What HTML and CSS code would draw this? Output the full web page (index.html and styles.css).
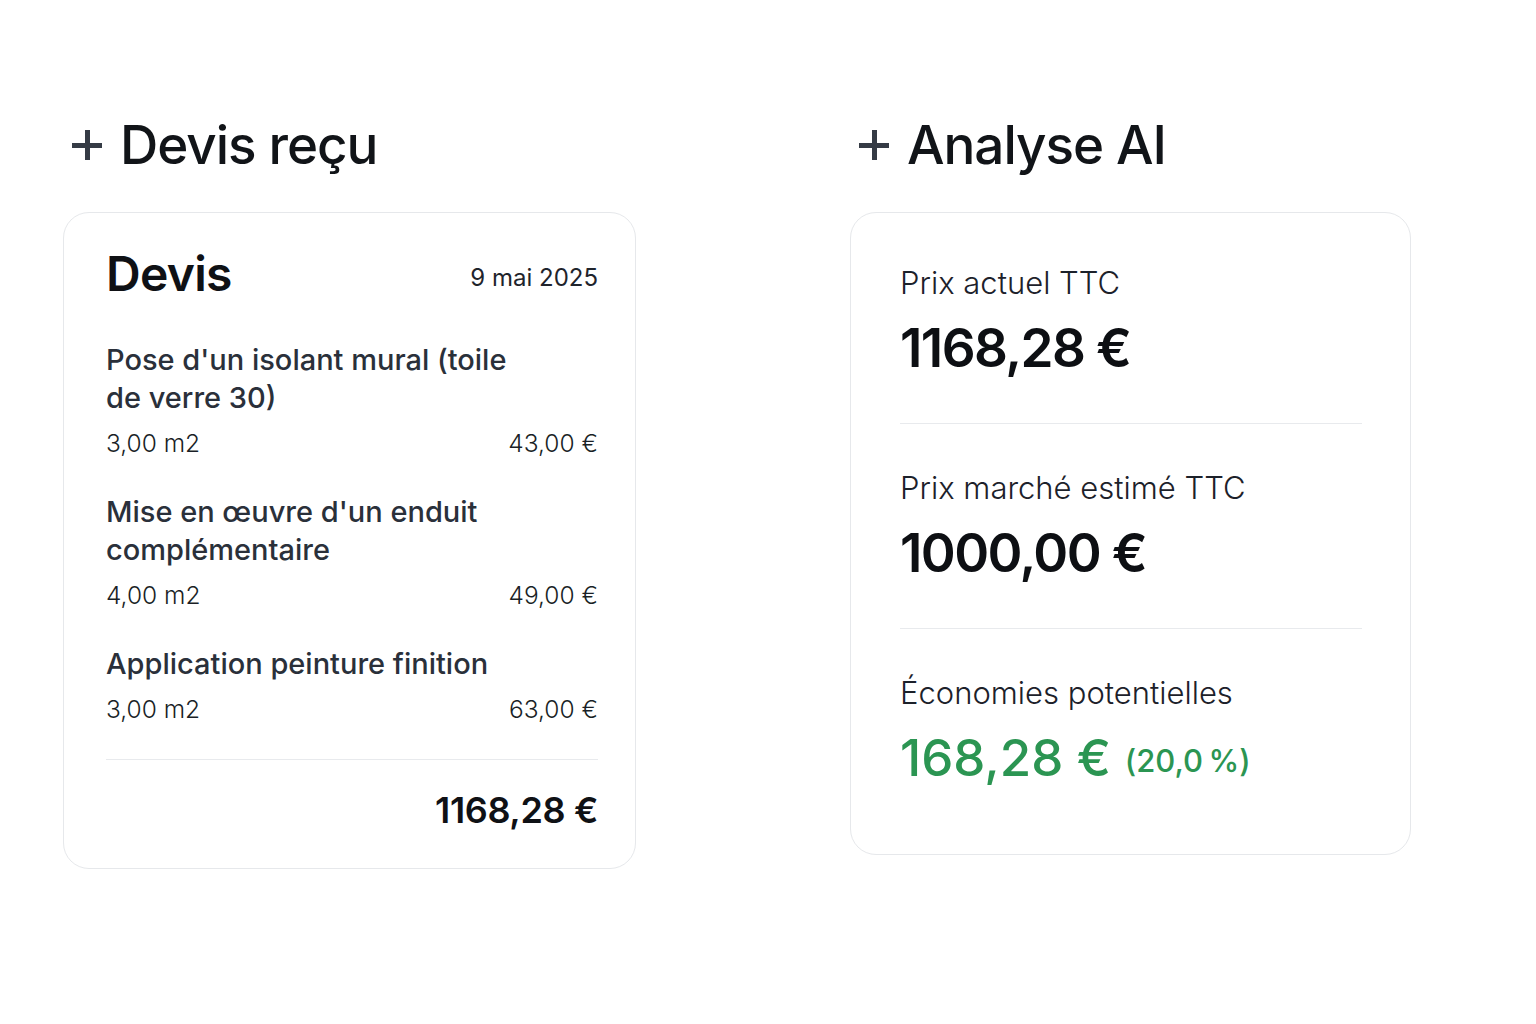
FILE: index.html
```html
<!DOCTYPE html>
<html lang="fr">
<head>
<meta charset="utf-8">
<title>Devis</title>
<link rel="stylesheet" href="styles.css">
</head>
<body>
<main class="page">
  <section class="col col-left">
    <h2 class="heading"><span class="plus"></span>Devis reçu</h2>
    <div class="card quote">
      <div class="quote-head">
        <h3 class="quote-title">Devis</h3>
        <span class="quote-date">9 mai 2025</span>
      </div>
      <div class="item">
        <div class="item-title">Pose d'un isolant mural (toile de verre 30)</div>
        <div class="item-row"><span>3,00 m2</span><span>43,00 €</span></div>
      </div>
      <div class="item">
        <div class="item-title">Mise en œuvre d'un enduit complémentaire</div>
        <div class="item-row"><span>4,00 m2</span><span>49,00 €</span></div>
      </div>
      <div class="item">
        <div class="item-title">Application peinture finition</div>
        <div class="item-row"><span>3,00 m2</span><span>63,00 €</span></div>
      </div>
      <div class="quote-total">1168,28 €</div>
    </div>
  </section>
  <section class="col col-right">
    <h2 class="heading"><span class="plus"></span>Analyse AI</h2>
    <div class="card analysis">
      <div class="metric">
        <div class="metric-label">Prix actuel TTC</div>
        <div class="metric-value">1168,28 €</div>
      </div>
      <div class="metric">
        <div class="metric-label">Prix marché estimé TTC</div>
        <div class="metric-value">1000,00 €</div>
      </div>
      <div class="metric">
        <div class="metric-label">Économies potentielles</div>
        <div class="metric-value savings">168,28 € <span class="pct">(20,0&#8239;%)</span></div>
      </div>
    </div>
  </section>
</main>
</body>
</html>
```

FILE: styles.css
```css
* { box-sizing: border-box; }
html, body { margin: 0; padding: 0; background: #ffffff; }
body {
  font-family: Inter, "Noto Sans", "Liberation Sans", sans-serif;
  color: #111418;
}
.page {
  display: flex;
  align-items: flex-start;
  gap: 214px;
  padding: 112px 0 0 63px;
}
.col-left { width: 573px; }
.col-right { width: 561px; }

.heading {
  display: flex;
  align-items: center;
  margin: 0 0 34px 0;
  padding-left: 9px;
  font-size: 53px;
  line-height: 66px;
  font-weight: 500;
  letter-spacing: -0.02em;
  color: #111418;
}
.plus {
  position: relative;
  width: 30px;
  height: 30px;
  margin-right: 18px;
  flex: none;
}
.plus::before, .plus::after {
  content: "";
  position: absolute;
  background: #353b45;
}
.plus::before { left: 0; right: 0; top: 12.5px; height: 5px; }
.plus::after { top: 0; bottom: 0; left: 12.5px; width: 5px; }

.card {
  border: 1.5px solid #e6e8eb;
  border-radius: 26px;
  background: #fff;
}
.quote { padding: 32px 37px 36px 42px; }
.quote-head {
  display: flex;
  justify-content: space-between;
  align-items: center;
}
.quote-title {
  margin: 0;
  font-size: 48px;
  line-height: 58px;
  font-weight: 600;
  letter-spacing: -0.015em;
  color: #0f1115;
}
.quote-date {
  padding-top: 6px;
  font-size: 24px;
  color: #1f242c;
  font-weight: 400;
}
.item { margin-top: 33px; }
.quote-head + .item { margin-top: 38px; }
.item-title {
  max-width: 405px;
  font-size: 29px;
  line-height: 38px;
  font-weight: 500;
  color: #2a303a;
}
.item-row {
  display: flex;
  justify-content: space-between;
  margin-top: 9px;
  font-size: 24.5px;
  line-height: 34px;
  font-weight: 300;
  color: #1a1f26;
}
.quote-total {
  margin-top: 33px;
  padding-top: 28px;
  border-top: 1.5px solid #e8eaed;
  text-align: right;
  font-size: 36px;
  line-height: 44px;
  font-weight: 600;
  letter-spacing: -0.01em;
  color: #0f1115;
}

.analysis { padding: 52px 48px 58px 49px; }
.metric + .metric {
  margin-top: 44px;
  padding-top: 46px;
  border-top: 1.5px solid #e8eaed;
}
.metric-label {
  font-size: 31px;
  line-height: 36px;
  font-weight: 300;
  color: #1c212a;
}
.metric-value {
  margin-top: 16px;
  font-size: 53px;
  line-height: 62px;
  font-weight: 600;
  letter-spacing: -0.03em;
  color: #0d0f13;
}
.metric-value.savings {
  font-size: 51px;
  font-weight: 500;
  letter-spacing: -0.045em;
  color: #2b9552;
}
.pct {
  position: relative;
  top: -4px;
  font-size: 31px;
  font-weight: 500;
  letter-spacing: -0.04em;
}
```
